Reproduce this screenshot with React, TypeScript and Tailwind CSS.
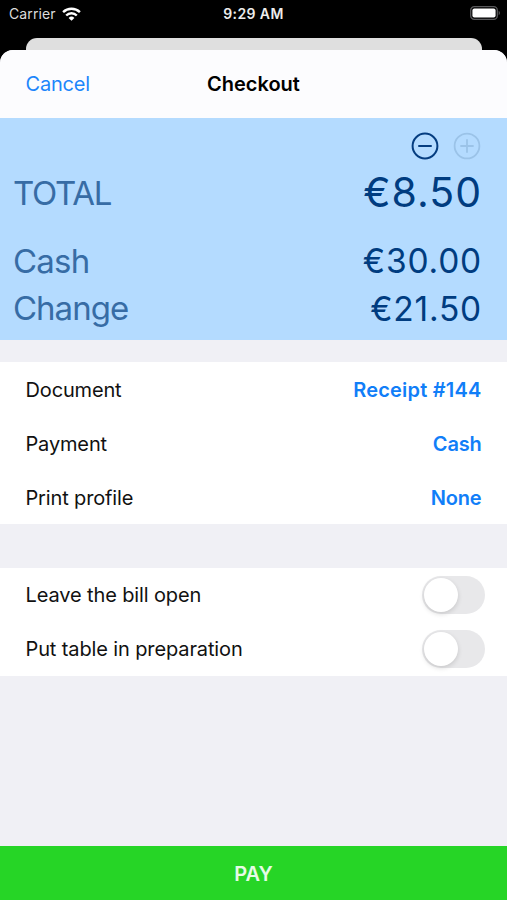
import { useState } from 'react';

interface DetailRow {
    label: string;
    value: string;
    valueTracking: string;
}

const DETAILS: DetailRow[] = [
    { label: 'Document', value: 'Receipt #144', valueTracking: 'tracking-[0.2px]' },
    { label: 'Payment', value: 'Cash', valueTracking: 'tracking-[-0.2px]' },
    { label: 'Print profile', value: 'None', valueTracking: 'tracking-[-0.2px]' },
];

function WifiIcon() {
    return (
        <svg className="h-[14px] w-[19px]" viewBox="0 0 19 14" fill="none" stroke="#fff" strokeWidth="2.4">
            <path d="M1.1 5.2a12 12 0 0 1 16.8 0" />
            <path d="M4.2 8.5a7.5 7.5 0 0 1 10.6 0" />
            <path d="M9.5 13.8 6.6 10.9a4.1 4.1 0 0 1 5.8 0Z" fill="#fff" stroke="none" />
        </svg>
    );
}

function BatteryIcon() {
    return (
        <svg className="h-[14px] w-[31px]" viewBox="0 0 31 14" fill="none">
            <rect x="0.7" y="0.7" width="26.6" height="12.6" rx="3.6" stroke="#59595b" strokeWidth="1.3" />
            <rect x="2.4" y="2.4" width="23.2" height="9.2" rx="2" fill="#fff" />
            <path d="M28.7 4.8a2.6 2.6 0 0 1 0 4.4Z" fill="#59595b" />
        </svg>
    );
}

function StatusBar() {
    return (
        <div className="grid h-[38px] grid-cols-3 items-start bg-black text-white">
            <div className="flex items-center gap-[6px] pt-[6px] pl-[9px]">
                <span className="text-[14px] leading-4 tracking-[0.1px] text-[#dcdcdc]">Carrier</span>
                <WifiIcon />
            </div>
            <span className="pt-[6px] text-center text-[14px] leading-4 font-semibold tracking-[0.4px] text-[#ececec]">9:29 AM</span>
            <div className="flex justify-end pt-[6px] pr-[6px]">
                <BatteryIcon />
            </div>
        </div>
    );
}

function Toggle({ label }: { label: string }) {
    const [on, setOn] = useState(false);

    return (
        <div className="flex h-[53.75px] items-center justify-between pr-[22px] pl-[25.5px]">
            <span className="text-[20px] tracking-[-0.12px]">{label}</span>
            <button
                type="button"
                role="switch"
                aria-checked={on}
                aria-label={label}
                onClick={() => setOn((v) => !v)}
                className={`flex h-[38px] w-[63px] items-center rounded-full p-[2px] ${on ? 'justify-end bg-[#26d526]' : 'bg-[#e8e8ea]'}`}
            >
                <span className="h-[34px] w-[34px] rounded-full bg-white shadow-[0_2px_5px_rgba(0,0,0,0.14)]" />
            </button>
        </div>
    );
}

export default function App() {
    return (
        <div className="flex h-[900px] w-[507px] flex-col overflow-hidden bg-black font-['Inter',sans-serif] text-[#111]">
            <StatusBar />

            {/* Edge of the screen behind the sheet */}
            <div className="mr-[25px] ml-[26px] h-[12px] rounded-t-[11px] bg-[#dfdfdf]" />

            <div className="flex flex-1 flex-col overflow-hidden rounded-t-[13px] bg-[#f0f0f5]">
                <header className="grid h-[68px] grid-cols-3 items-center bg-[#fcfcfe] px-[25.5px]">
                    <button type="button" className="text-left text-[20px] tracking-[-0.2px] text-[#1c86fb]">
                        Cancel
                    </button>
                    <h1 className="text-center text-[20px] font-semibold tracking-[0px] text-black">Checkout</h1>
                </header>

                {/* Totals */}
                <section className="h-[222px] bg-[#b4dbff] pr-[25px] pl-[13px] text-[#003c80]">
                    <div className="flex justify-end gap-[14px] pt-[14px] pr-px">
                        <button type="button" aria-label="Decrease">
                            <svg className="h-[28px] w-[28px]" viewBox="0 0 28 28" fill="none" stroke="#053d80" strokeWidth="2">
                                <circle cx="14" cy="14" r="12.4" />
                                <path d="M8 14h12" strokeLinecap="round" />
                            </svg>
                        </button>
                        <button type="button" aria-label="Increase" disabled>
                            <svg className="h-[28px] w-[28px]" viewBox="0 0 28 28" fill="none" stroke="#9bc3e8" strokeWidth="1.8">
                                <circle cx="14" cy="14" r="12.4" />
                                <path d="M8 14h12M14 8v12" strokeLinecap="round" />
                            </svg>
                        </button>
                    </div>
                    <div className="flex h-[66px] items-center justify-between">
                        <span className="pt-[2px] text-[33px] tracking-[-1.3px] text-[#376ca5]">TOTAL</span>
                        <span className="text-[41px] tracking-[1px]">€8.50</span>
                    </div>
                    <div className="flex h-[70px] items-center justify-between">
                        <span className="pt-px text-[33px] tracking-[-0.8px] text-[#376ca5]">Cash</span>
                        <span className="text-[33.5px] tracking-[0.8px]">€30.00</span>
                    </div>
                    <div className="flex h-[26px] items-center justify-between">
                        <span className="text-[33px] tracking-[-1px] text-[#376ca5]">Change</span>
                        <span className="text-[33.5px] tracking-[0.8px]">€21.50</span>
                    </div>
                </section>

                <section className="mt-[22px] bg-white">
                    {DETAILS.map((row) => (
                        <div key={row.label} className="flex h-[54px] items-center justify-between pt-[2px] pr-[25.5px] pl-[25.5px]">
                            <span className="text-[20px] tracking-[-0.15px]">{row.label}</span>
                            <button type="button" className={`text-[20px] font-semibold text-[#117ef8] ${row.valueTracking}`}>
                                {row.value}
                            </button>
                        </div>
                    ))}
                </section>

                <section className="mt-[44px] bg-white">
                    <Toggle label="Leave the bill open" />
                    <Toggle label="Put table in preparation" />
                </section>

                <button type="button" className="mt-auto h-[54px] bg-[#26d526] pt-px text-[20px] font-semibold text-[#e6fbe6]">
                    PAY
                </button>
            </div>
        </div>
    );
}
